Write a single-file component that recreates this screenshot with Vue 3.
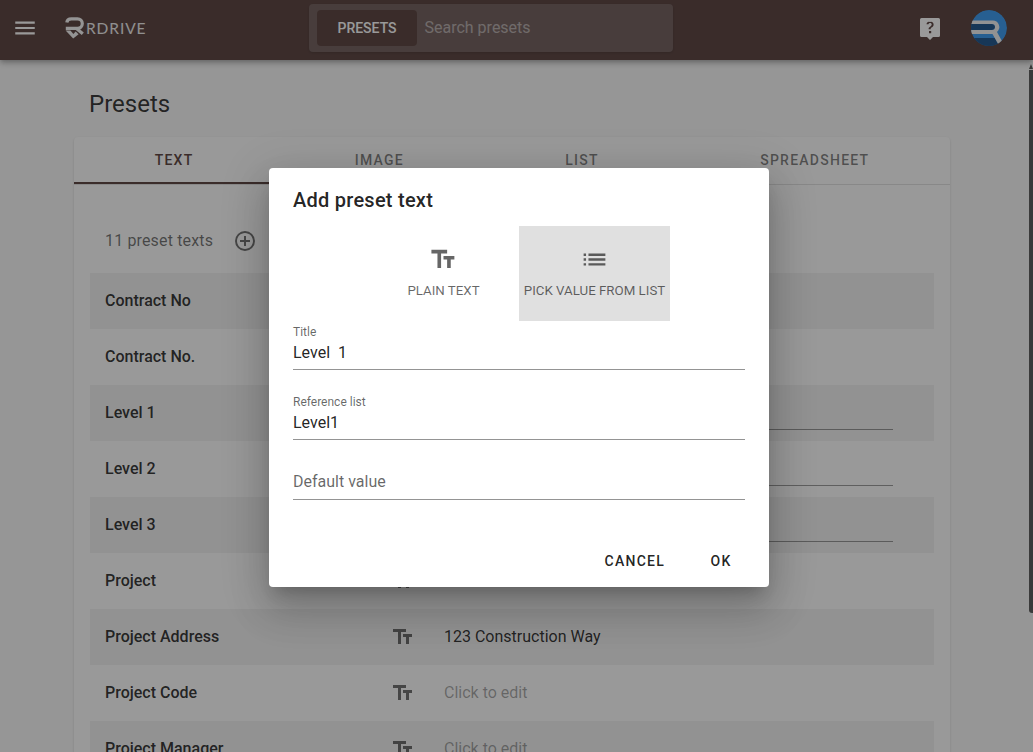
<template>
  <div class="page">
    <header class="topbar">
      <svg class="menu-icon" viewBox="0 0 24 24"><path d="M3 6h18v2H3V6m0 5h18v2H3v-2m0 5h18v2H3v-2z" /></svg>
      <div class="logo">
        <svg class="logo-mark" viewBox="0 0 20 22">
          <path class="logo-stroke" d="M1.800 5.500Q2.300 1.800 6.300 1.800H12.500a4.800 4.800 0 0 1 0 9.600H.8" />
          <path class="logo-stroke" d="M12 12L17.800 16.800" />
          <path d="M.6 13.600H5.400L8.400 17l2.300-2.500 2.900 2.800-5.400 4.300z" />
        </svg>
        <span class="logo-text">RDRIVE</span>
      </div>
      <div class="search">
        <div class="search-btn">PRESETS</div>
        <span class="search-text">Search presets</span>
      </div>
      <div class="top-right">
        <svg class="help-icon" viewBox="0 0 24 24">
          <path fill-rule="evenodd" d="M3.500 2h17a1.500 1.500 0 0 1 1.500 1.500v16a1.500 1.500 0 0 1-1.500 1.500h-5.500l-3 3-3-3H3.500a1.500 1.500 0 0 1-1.500-1.500v-16a1.500 1.500 0 0 1 1.500-1.500zM12.200 5.500c-1.100 0-2 .2-2.700.7-.7.5-1 1.200-1 2.100h2c0-.4.100-.7.400-.9.300-.2.700-.3 1.200-.3.500 0 .9.100 1.200.4.300.3.400.6.400 1 0 .4-.1.800-.4 1.100-.2.300-.5.500-.9.800-.8.500-1.300.9-1.500 1.300-.2.300-.3.800-.3 1.500h2c0-.4.100-.8.200-1 .1-.2.400-.5.800-.7.600-.3 1.100-.7 1.500-1.200.4-.5.500-1.100.500-1.700 0-1-.4-1.800-1.100-2.400-.7-.5-1.600-.7-2.800-.7zM11 15v2.200h2.200V15z" />
        </svg>
        <svg class="avatar" viewBox="0 0 36 36">
          <clipPath id="avatar-clip"><circle cx="18" cy="18" r="18" /></clipPath>
          <g clip-path="url(#avatar-clip)">
            <circle cx="18" cy="18" r="18" fill="#2e94f0" />
            <path d="M0 14h21a3 3 0 0 1 0 6H0z" fill="#0f4a85" />
            <path d="M0 28h24l4 8H0z" fill="#0f4a85" />
            <path d="M0 10.500h21.500a6.500 6.500 0 0 1 4.500 11.400L32 33l-4 2.500-6.500-11.500H0v-4h21a3 3 0 0 0 0-6H0z" fill="#f2f2f2" />
          </g>
        </svg>
      </div>
    </header>

    <main class="content">
      <h1 class="page-title">Presets</h1>
      <section class="card">
        <nav class="tabs">
          <div v-for="(tab, i) in tabs" :key="tab" class="tab" :class="{ active: i === 0 }">{{ tab }}</div>
        </nav>
        <div class="card-body">
          <div class="count-line">
            <span class="count">11 preset texts</span>
            <svg class="add-icon" viewBox="0 0 24 24">
              <path d="M12 20c-4.410 0-8-3.590-8-8s3.590-8 8-8 8 3.590 8 8-3.590 8-8 8m0-18A10 10 0 0 0 2 12a10 10 0 0 0 10 10 10 10 0 0 0 10-10A10 10 0 0 0 12 2m1 5h-2v4H7v2h4v4h2v-4h4v-2h-4V7z" />
            </svg>
          </div>
          <div v-for="row in rows" :key="row.name" class="row">
            <span class="row-name">{{ row.name }}</span>
            <svg class="type-icon" viewBox="0 0 24 24"><path :d="textIcon" /></svg>
            <span v-if="row.field" class="row-field"></span>
            <span v-else-if="row.value !== null" class="row-value" :class="{ empty: !row.value }">{{ row.value || 'Click to edit' }}</span>
          </div>
        </div>
      </section>
    </main>

    <div class="scrollbar">
      <div class="scroll-arrow"></div>
      <div class="scroll-thumb"></div>
    </div>

    <div class="scrim"></div>

    <div class="dialog-wrap">
      <div class="dialog">
        <h2 class="dialog-title">Add preset text</h2>
        <div class="type-toggle">
          <div class="type-btn">
            <svg class="toggle-icon" viewBox="0 0 24 24"><path :d="textIcon" /></svg>
            <span>PLAIN TEXT</span>
          </div>
          <div class="type-btn selected">
            <svg class="toggle-icon" viewBox="0 0 24 24">
              <path d="M3 13h2v-2H3v2zm0 4h2v-2H3v2zm0-8h2V7H3v2zm4 4h14v-2H7v2zm0 4h14v-2H7v2zM7 7v2h14V7H7z" />
            </svg>
            <span>PICK VALUE FROM LIST</span>
          </div>
        </div>
        <div class="field">
          <label>Title</label>
          <div class="field-value">Level&nbsp; 1</div>
        </div>
        <div class="field">
          <label>Reference list</label>
          <div class="field-value">Level1</div>
        </div>
        <div class="field bare">
          <div class="field-value placeholder">Default value</div>
        </div>
        <div class="actions">
          <button class="action">CANCEL</button>
          <button class="action">OK</button>
        </div>
      </div>
    </div>
  </div>
</template>

<script setup>
const textIcon = 'M2 4v3h5v12h3V7h5V4H2m19 5h-9v3h3v7h3v-7h3V9z'

const tabs = ['TEXT', 'IMAGE', 'LIST', 'SPREADSHEET']

// value: null means the cell sits behind the dialog
const rows = [
  { name: 'Contract No', value: null },
  { name: 'Contract No.', value: null },
  { name: 'Level 1', field: true },
  { name: 'Level 2', field: true },
  { name: 'Level 3', field: true },
  { name: 'Project', value: null },
  { name: 'Project Address', value: '123 Construction Way' },
  { name: 'Project Code', value: '' },
  { name: 'Project Manager', value: '' }
]
</script>

<style>
html,
body {
  margin: 0;
  overflow: hidden;
}
</style>

<style scoped>
.page {
  position: relative;
  width: 1033px;
  height: 752px;
  overflow: hidden;
  background: #fafafa;
  font-family: Roboto, "Liberation Sans", sans-serif;
  color: rgba(0, 0, 0, 0.87);
}

.topbar {
  position: relative;
  z-index: 1;
  display: flex;
  align-items: center;
  height: 60px;
  box-sizing: border-box;
  padding-bottom: 4px;
  background: #513733;
  box-shadow: 0 2px 4px -1px rgba(0, 0, 0, 0.2), 0 4px 5px 0 rgba(0, 0, 0, 0.14), 0 1px 10px 0 rgba(0, 0, 0, 0.12);
}

.menu-icon {
  width: 26px;
  height: 26px;
  margin-left: 12px;
  fill: #fff;
}

.logo {
  display: flex;
  align-items: center;
  width: 244px;
  margin-left: 27px;
}

.logo-mark {
  width: 20px;
  height: 22px;
  fill: #f5f5f5;
}

.logo-stroke {
  fill: none;
  stroke: #f5f5f5;
  stroke-width: 3.2;
}

.logo-text {
  margin-left: 1px;
  font-family: Lato, sans-serif;
  font-size: 15.5px;
  letter-spacing: 0.9px;
  color: #eee;
}

.search {
  display: flex;
  align-items: center;
  width: 364px;
  height: 48px;
  box-sizing: border-box;
  padding: 0 8px;
  background: #6a5654;
  border-radius: 4px;
  box-shadow: 0 1px 3px rgba(0, 0, 0, 0.2);
}

.search-btn {
  display: flex;
  align-items: center;
  justify-content: center;
  width: 100px;
  height: 36px;
  background: #513733;
  border-radius: 4px;
  font-size: 14px;
  font-weight: 500;
  color: #fff;
}

.search-text {
  margin-left: 7.5px;
  padding-bottom: 1px;
  font-size: 16px;
  color: rgba(255, 255, 255, 0.5);
}

.top-right {
  display: flex;
  align-items: center;
  margin-left: auto;
}

.help-icon {
  width: 24px;
  height: 24px;
  fill: #fff;
}

.avatar {
  width: 36px;
  height: 36px;
  margin: 0 26px 0 29px;
}

.content {
  height: 692px;
  overflow: hidden;
}

.page-title {
  margin: 0;
  padding: 29px 0 0 89px;
  font-size: 24px;
  line-height: 30px;
  font-weight: 400;
}

.card {
  width: 876px;
  margin: 18px 0 0 74px;
  background: #fff;
  border-radius: 4px;
  box-shadow: 0 2px 1px -1px rgba(0, 0, 0, 0.2), 0 1px 1px 0 rgba(0, 0, 0, 0.14), 0 1px 3px 0 rgba(0, 0, 0, 0.12);
}

.tabs {
  display: flex;
  height: 48px;
  box-sizing: border-box;
  border-bottom: 1px solid rgba(0, 0, 0, 0.12);
}

.tab {
  flex: 1 1 auto;
  display: flex;
  align-items: center;
  justify-content: center;
  height: 47px;
  box-sizing: border-box;
  border-bottom: 2px solid transparent;
  font-size: 14px;
  font-weight: 500;
  letter-spacing: 1.25px;
  color: rgba(0, 0, 0, 0.54);
}

.tab.active {
  color: #513733;
  border-bottom-color: #513733;
}

.card-body {
  padding: 32px 16px 16px;
}

.count-line {
  display: flex;
  align-items: center;
  height: 48px;
  margin-bottom: 8px;
  padding: 0 0 2px 15px;
  box-sizing: border-box;
}

.count {
  font-size: 16px;
  letter-spacing: 0.15px;
  color: rgba(0, 0, 0, 0.6);
}

.add-icon {
  width: 24px;
  height: 24px;
  margin: 2px 0 0 20px;
  fill: rgba(0, 0, 0, 0.6);
}

.row {
  display: flex;
  align-items: center;
  height: 56px;
  box-sizing: border-box;
  padding: 0 0 2px 15px;
}

.row:nth-of-type(even) {
  background: rgba(0, 0, 0, 0.05);
}

.row-name {
  width: 286px;
  font-size: 16px;
  font-weight: 500;
}

.type-icon {
  width: 24px;
  height: 24px;
  margin-top: 2px;
  fill: rgba(0, 0, 0, 0.6);
}

.row-value {
  margin-left: 29px;
  font-size: 16px;
}

.row-value.empty {
  color: rgba(0, 0, 0, 0.38);
}

.row-field {
  flex: 1;
  align-self: flex-start;
  height: 44px;
  margin: 0 41px 0 29px;
  border-bottom: 1px solid rgba(0, 0, 0, 0.42);
}

.scrollbar {
  position: absolute;
  top: 60px;
  right: 0;
  width: 4px;
}

.scroll-arrow {
  width: 0;
  height: 0;
  margin-top: 4px;
  border-left: 2px solid transparent;
  border-right: 2px solid transparent;
  border-bottom: 5px solid #505050;
}

.scroll-thumb {
  height: 543px;
  margin-top: 1px;
  background: #505050;
  border-bottom-left-radius: 3px;
}

.scrim {
  position: absolute;
  inset: 0;
  z-index: 2;
  background: rgba(33, 33, 33, 0.46);
}

.dialog-wrap {
  position: absolute;
  top: 168px;
  left: 269px;
  z-index: 3;
}

.dialog {
  display: flex;
  flex-direction: column;
  width: 500px;
  height: 419px;
  box-sizing: border-box;
  padding: 16px 24px 0;
  background: #fff;
  border-radius: 4px;
  box-shadow: 0 11px 15px -7px rgba(0, 0, 0, 0.2), 0 24px 38px 3px rgba(0, 0, 0, 0.14), 0 9px 46px 8px rgba(0, 0, 0, 0.12);
}

.dialog-title {
  margin: 0;
  font-size: 20px;
  line-height: 32px;
  font-weight: 500;
  letter-spacing: 0.25px;
}

.type-toggle {
  display: flex;
  justify-content: center;
  margin-top: 10px;
}

.type-btn {
  display: flex;
  flex-direction: column;
  align-items: center;
  width: 151px;
  height: 95px;
  box-sizing: border-box;
  padding-top: 19px;
  font-size: 13.3px;
  color: rgba(0, 0, 0, 0.6);
  white-space: nowrap;
}

.type-btn span {
  margin-top: 9px;
  line-height: 16px;
}

.type-btn.selected {
  background: #e0e0e0;
}

.toggle-icon {
  width: 29px;
  height: 29px;
  fill: rgba(0, 0, 0, 0.6);
}

.field {
  height: 44px;
  margin-top: 25px;
  border-bottom: 1px solid rgba(0, 0, 0, 0.42);
}

.field.bare {
  height: 34px;
}

.type-toggle + .field {
  margin-top: 4px;
}

.field label {
  display: block;
  height: 14px;
  font-size: 12px;
  line-height: 14px;
  color: rgba(0, 0, 0, 0.6);
}

.field-value {
  margin-top: 2px;
  font-size: 16px;
  line-height: 24px;
}

.field-value.placeholder {
  margin-top: 5px;
  color: rgba(0, 0, 0, 0.6);
}

.actions {
  display: flex;
  justify-content: flex-end;
  gap: 8px;
  margin: auto -8px 8px 0;
}

.action {
  height: 36px;
  min-width: 64px;
  padding: 0 16px;
  border: 0;
  background: none;
  font-family: inherit;
  font-size: 14px;
  font-weight: 500;
  letter-spacing: 1.25px;
  color: rgba(0, 0, 0, 0.87);
}
</style>
